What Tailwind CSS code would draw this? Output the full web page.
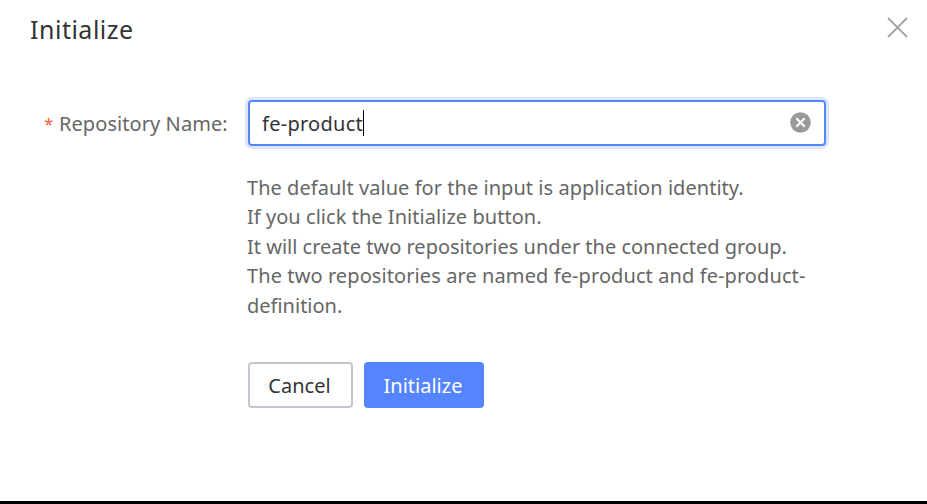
<!DOCTYPE html>
<html lang="en">
<head>
<meta charset="utf-8">
<title>Initialize</title>
<script src="https://cdn.jsdelivr.net/npm/@tailwindcss/browser@4"></script>
</head>
<body class="bg-white font-['Noto_Sans','Open_Sans',sans-serif] overflow-hidden">
<div class="w-[927px] h-[504px] border-b-[3px] border-black flex flex-col">
  <header class="flex justify-between pl-[30px] pr-[19px] h-[100px] pt-[12px]">
    <h1 class="text-[25px] leading-[34px] tracking-[0.5px] text-[#333] whitespace-nowrap"><span>Initialize</span></h1>
    <button class="w-[21px] h-[21px] mt-[5px]" aria-label="Close">
      <svg width="21" height="21" viewBox="0 0 21 21" fill="none" stroke="#a3a3a3" stroke-width="1.8"><path d="M1 1L20 20M20 1L1 20"/></svg>
    </button>
  </header>
  <main class="flex text-[20px]">
    <label class="w-[248px] h-[46px] leading-[48px] pl-[44px] text-[#666] whitespace-nowrap flex"><span class="text-[#ff5b37] text-[17px] w-[15px]">*</span><span class="tracking-[0.07px]">Repository Name:</span></label>
    <div class="w-[578px]">
      <div class="h-[46px] border-2 border-[#5584ff] rounded-[4px] shadow-[0_0_0_3px_#dce6ff] flex items-center justify-between pl-[12px] pr-[13px]">
        <div class="flex items-center text-[#333]"><span class="tracking-[0.27px] pt-[2px]">fe-product</span><i class="w-px h-[26px] bg-black"></i></div>
        <svg class="mb-[2px]" width="21" height="21" viewBox="0 0 21 21"><circle cx="10.5" cy="10.5" r="10.3" fill="#999"/><path d="M7 7L14 14M14 7L7 14" stroke="#fff" stroke-width="2.2" stroke-linecap="round"/></svg>
      </div>
      <div class="mt-[27px] -ml-px leading-[29.4px] text-[#666] whitespace-nowrap">
        <p><span class="tracking-[0.04px]">The default value for the input is application identity.</span></p>
        <p><span class="tracking-[0.04px]">If you click the Initialize button.</span></p>
        <p><span>It will create two repositories under the connected group.</span></p>
        <p><span class="tracking-[0.09px]">The two repositories are named fe-product and fe-product-</span></p>
        <p><span>definition.</span></p>
      </div>
      <div class="flex gap-[11px] mt-[42px]">
        <button class="w-[105px] h-[46px] border-2 border-[#c4c6cf] rounded-[4px] text-[#333] pt-[2px] pr-[2px]"><span>Cancel</span></button>
        <button class="w-[120px] h-[46px] bg-[#5584ff] rounded-[4px] text-white pt-[2px] pr-[2px]"><span>Initialize</span></button>
      </div>
    </div>
  </main>
</div>
</body>
</html>
